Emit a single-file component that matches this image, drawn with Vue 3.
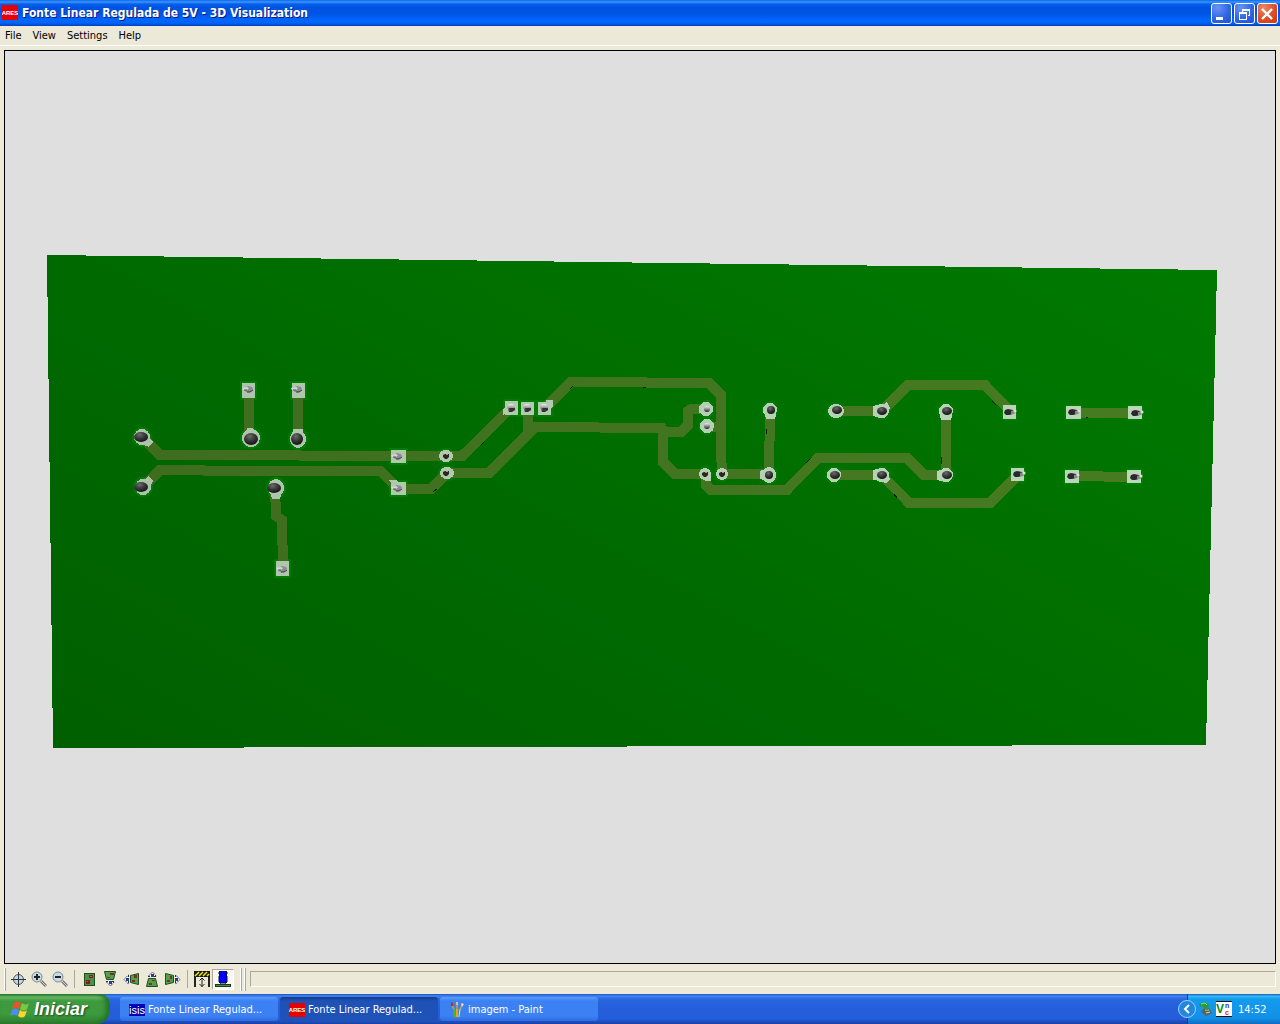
<script setup>
const menus = ['File', 'View', 'Settings', 'Help']

const traces = [
  '249,390 249,438', '298,390 298,438',
  '143,438 160,455 299,455 301,456 462,456 510,409',
  '143,487 160,470 203,470 205,471 380,471 399,489 431,489 447,473 489,473 535,427 662,428',
  '528,408 528,428',
  '275,488 276,516 282,520 283,568',
  '660,428 666,432 681,432 688,425 688,411 691,409 706,409',
  '663,428 663,462 675,474 706,474',
  '545,408 571,382 645,382 647,383 709,383 721,395 721,450 722,474',
  '707,426 720,428', '722,474 769,474', '770,410 769,474',
  '706,474 706,485 711,490 787,490 818,458 907,458 924,475 946,475',
  '836,411 882,411 908,385 985,385 1010,411', '946,411 946,475',
  '834,475 882,475 909,503 990,503 1018,475',
  '1073,413 1136,413', '1072,476 1134,477',
]

const scuffs = ['481,445 484,442', '433,492 437,489', '570,389 573,386', '643,387 646,387', '766,429 766,434', '806,463 810,459', '941,457 941,464', '992,401 996,405', '894,494 897,498', '1086,417 1088,417']

const round = [
  [142, 437, 8, 8], [143, 487, 8, 8], [251, 438, 9, 9], [298, 439, 8, 9], [276, 488, 8, 9],
  [446, 456, 7, 6], [447, 473, 7, 6], [706, 409, 7, 7], [707, 426, 7, 7], [705, 474, 6, 6], [722, 474, 6, 6],
  [770, 410, 7, 7], [769, 475, 7, 8], [836, 411, 8, 7], [882, 411, 7, 7], [834, 475, 7, 7], [882, 475, 7, 7],
  [946, 411, 7, 7], [946, 475, 7, 7],
]
const corners = [
  '143,445 149,447 153,442 148,436', '143,481 149,476 153,481 149,488',
  '246,436 247,428 253,428 256,434', '292,436 293,429 303,429 304,436', '270,492 272,499 280,499 282,492',
  '706,403 699,406 699,413 707,415', '709,420 714,424 713,431 707,432', '705,480 705,481 711,481 711,474',
  '764,410 766,419 775,419 777,410', '768,468 760,471 760,479 768,481',
  '882,404 873,406 873,416 880,418', '884,404 887,402 890,408 888,412', '882,468 873,470 873,480 880,481', '882,482 886,483 890,479 888,474',
  '939,411 941,420 951,420 953,411', '946,468 937,471 937,480 945,482',
  '506,413 503,415 503,410 505,407', '546,402 546,400 553,400 553,407 550,409', '391,483 389,480 396,480 401,484',
]
const square = [
  [242, 383, 13, 15], [292, 383, 13, 15], [276, 561, 13, 15], [391, 450, 15, 13], [391, 482, 15, 13],
  [505, 401, 13, 14], [521, 402, 13, 13], [538, 402, 13, 13], [1003, 405, 13, 14], [1011, 468, 13, 13],
  [1066, 406, 15, 13], [1128, 406, 14, 13], [1065, 470, 14, 13], [1127, 470, 14, 13],
]
const domes = [[141, 437, 7, 5], [141, 487, 7, 5], [251, 439, 7, 6], [297, 439, 6, 6], [274, 488, 7, 5], [771, 410, 4, 4], [769, 475, 4, 4], [837, 410, 5, 4], [882, 411, 5, 4], [835, 475, 5, 4], [882, 475, 5, 4], [947, 411, 5, 4], [947, 475, 5, 4]]
const nubs = [[248, 389], [297, 389], [282, 569], [397, 456], [397, 488]]
const capped = [[511, 408], [527, 408], [544, 408]]
const small = [[446, 456], [446, 473], [705, 474], [722, 474]]
const silver = [[707, 409], [707, 426]]
const pins = [[1009, 412], [1018, 474], [1073, 412], [1136, 413], [1072, 476], [1135, 477]]
</script>

<template>
  <div class="window">
    <header class="titlebar">
      <svg class="app" viewBox="0 0 16 16"><rect y="0" width="16" height="15" fill="#e80000" /><text x="8" y="10" text-anchor="middle" class="ares">ARES</text></svg>
      <h1>Fonte Linear Regulada de 5V - 3D Visualization</h1>
      <button class="ctl" aria-label="Minimize"><svg viewBox="0 0 19 19"><path d="M4 13h7v3H4z" fill="#fff" /></svg></button>
      <button class="ctl" aria-label="Restore"><svg viewBox="0 0 19 19" fill="#fff" shape-rendering="crispEdges"><path d="M7 5h8v7h-2v-1h1V7H8v1H7zM4 8h8v8H4zM5 10v5h6v-5z" fill-rule="evenodd" /></svg></button>
      <button class="ctl close" aria-label="Close"><svg viewBox="0 0 19 19"><path d="M4 5l10 10M14 5L4 15" stroke="#fff" stroke-width="2.400" /></svg></button>
    </header>

    <nav class="menubar"><button v-for="m in menus" :key="m">{{ m }}</button></nav>

    <main class="viewport">
      <svg class="board" viewBox="5 51 1270 912" role="img" aria-label="Circuit board">
        <defs>
          <linearGradient id="mask" gradientUnits="userSpaceOnUse" x1="400" y1="900" x2="850" y2="100"><stop offset="0" stop-color="#006000" /><stop offset=".5" stop-color="#006c00" /><stop offset="1" stop-color="#007900" /></linearGradient>
          <linearGradient id="copper" gradientUnits="userSpaceOnUse" x1="150" y1="0" x2="1140" y2="0"><stop offset="0" stop-color="#3e6d1e" /><stop offset="1" stop-color="#477c22" /></linearGradient>
          <linearGradient id="tin" gradientUnits="userSpaceOnUse" x1="150" y1="0" x2="1140" y2="0"><stop offset="0" stop-color="#abc3aa" /><stop offset="1" stop-color="#bbd8bb" /></linearGradient>
          <radialGradient id="dome" cx=".4" cy=".28" r=".7"><stop offset="0" stop-color="#6c6c6c" /><stop offset=".45" stop-color="#404040" /><stop offset="1" stop-color="#151515" /></radialGradient>
          <linearGradient id="metal" x1="0" y1="0" x2="0" y2="1"><stop offset="0" stop-color="#eee" /><stop offset=".45" stop-color="#999" /><stop offset="1" stop-color="#222" /></linearGradient>
        </defs>
        <polygon points="47,255 1217,270 1206,745 53,748" fill="url(#mask)" shape-rendering="crispEdges" />
        <g fill="none" stroke="#007c00" stroke-width="4" stroke-linejoin="round">
          <ellipse v-for="(p, i) in round" :key="'h' + i" :cx="p[0]" :cy="p[1]" :rx="p[2]" :ry="p[3]" />
          <rect v-for="(p, i) in square" :key="'s' + i" :x="p[0]" :y="p[1]" :width="p[2]" :height="p[3]" />
        </g>
        <g fill="none" stroke="url(#copper)" stroke-width="10" shape-rendering="crispEdges">
          <path v-for="t in traces" :key="t" :d="'M' + t + 'l.01 .01'" />
        </g>
        <path v-for="s in scuffs" :key="s" :d="'M' + s" stroke="#061806" shape-rendering="crispEdges" />
        <g fill="url(#tin)" shape-rendering="crispEdges">
          <path v-for="c in corners" :key="c" :d="'M' + c + 'z'" />
          <path v-for="(p, i) in round" :key="i" :d="`M${p[0] - p[2]} ${p[1]}a${p[2]} ${p[3]} 0 1 0 ${2 * p[2]} 0a${p[2]} ${p[3]} 0 1 0 ${-2 * p[2]} 0`" />
          <rect v-for="(p, i) in square" :key="'q' + i" :x="p[0]" :y="p[1]" :width="p[2]" :height="p[3]" />
        </g>
        <ellipse v-for="(p, i) in domes" :key="'d' + i" :cx="p[0]" :cy="p[1]" :rx="p[2]" :ry="p[3]" fill="url(#dome)" />
        <g v-for="(p, i) in nubs" :key="'n' + i" :transform="`translate(${p[0]} ${p[1]})`">
          <path d="M-5 0l5-3 4 1 1 2-3 3h-4z" fill="#8b8b90" /><path d="M-6-1l5-1 2 1-2 2h-4z" fill="#d4d4dc" /><path d="M-1 3h3l3-2" stroke="#333" fill="none" /><path d="M-4 1h3" stroke="#555" />
        </g>
        <g v-for="(p, i) in capped" :key="'c' + i" :transform="`translate(${p[0]} ${p[1]})`">
          <path d="M-4-1l2-3h4l2 3v3l-3 2h-3z" fill="url(#metal)" /><path d="M-2 0h6v2l-2 1h-3z" fill="#333" />
        </g>
        <g v-for="(p, i) in small" :key="'m' + i" :transform="`translate(${p[0]} ${p[1]})`">
          <path d="M-3-1l2-1h4v3l-2 2h-2l-2-2z" fill="#292725" /><path d="M0-2h2v1H0z" fill="#e88b0c" />
        </g>
        <ellipse v-for="(p, i) in silver" :key="'v' + i" :cx="p[0]" :cy="p[1]" rx="3" ry="3" fill="url(#metal)" />
        <g v-for="(p, i) in pins" :key="'p' + i" :transform="`translate(${p[0]} ${p[1]})`">
          <path d="M-4-2l3-1 5 1v4l-4 1h-3l-2-2z" fill="#292929" /><path d="M2-1l3-1 2 2-2 2H2z" fill="#888" /><circle cx="6" cy="-1" r="1.500" fill="#ddd" />
        </g>
      </svg>
    </main>

    <footer class="tools">
      <i class="grip"></i>
      <button aria-label="Center"><svg viewBox="0 0 16 16" fill="none"><circle cx="8.500" cy="8.500" r="5" fill="#b8d8ec" stroke="#555" /><path d="M8.500 1v15M1 8.500h15" stroke="#333" /></svg></button>
      <button aria-label="Zoom in"><svg viewBox="0 0 16 16" fill="none"><path d="M10 10l5 5" stroke="#777" stroke-width="3" /><path d="M10 10l5 5" stroke="#ccc" /><circle cx="6" cy="6" r="5" fill="#c0dced" stroke="#888" /><path d="M6 3v6M3 6h6" stroke="#222" stroke-width="2" /></svg></button>
      <button aria-label="Zoom out"><svg viewBox="0 0 16 16" fill="none"><path d="M10 10l5 5" stroke="#777" stroke-width="3" /><path d="M10 10l5 5" stroke="#ccc" /><circle cx="6" cy="6" r="5" fill="#c0dced" stroke="#888" /><path d="M3 6h6" stroke="#222" stroke-width="2" /></svg></button>
      <i class="sep"></i>
      <button aria-label="Top view"><svg viewBox="0 0 16 16" shape-rendering="crispEdges"><path d="M3 2h11v13H3z" fill="#234d20" /><path d="M4 3h9v11H4z" fill="#489246" /><path d="M8 4h4v3H8zM5 9h4v4H5z" fill="#7c2020" /><path d="M9 5h2v1H9zM6 10h1v1H6z" fill="#d05050" /></svg></button>
      <button aria-label="Front view"><svg viewBox="0 0 16 16"><path d="M2.500.5h11l-2 8h-7z" fill="#52a04e" stroke="#234d20" /><path d="M8 2h4v2H8zM5 6h3v1H5z" fill="#7c3020" /><path d="M4 10.500h8.500l-4 4.500z" fill="#fff" stroke="#333" stroke-dasharray="2 1" /><path d="M7 10h3v3H7z" fill="#2337bb" /></svg></button>
      <button aria-label="Left view"><svg viewBox="0 0 16 16"><path d="M15.500 2.500v11l-8-2v-7z" fill="#52a04e" stroke="#234d20" /><path d="M11 4h3v3h-3zM9 9h3v2H9z" fill="#7c3020" /><path d="M5.500 4v9L1 8.500z" fill="#fff" stroke="#333" stroke-dasharray="2 1" /><path d="M3 7h3v3H3z" fill="#2337bb" /></svg></button>
      <button aria-label="Back view"><svg viewBox="0 0 16 16"><path d="M2.500 15.500h11l-2-8h-7z" fill="#52a04e" stroke="#234d20" /><path d="M8 9h3v1H8zM5 12h3v2H5z" fill="#7c3020" /><path d="M4 5.500h8.500L8.500 1z" fill="#fff" stroke="#333" stroke-dasharray="2 1" /><path d="M7 3h3v3H7z" fill="#2337bb" /></svg></button>
      <button aria-label="Right view"><svg viewBox="0 0 16 16"><path d="M.5 2.500v11l8-2v-7z" fill="#52a04e" stroke="#234d20" /><path d="M5 5h2v3H5zM2 9h3v2H2z" fill="#7c3020" /><path d="M10.500 4v9L15 8.500z" fill="#fff" stroke="#333" stroke-dasharray="2 1" /><path d="M10 7h3v3h-3z" fill="#2337bb" /></svg></button>
      <i class="sep"></i>
      <button aria-label="Height"><svg viewBox="0 0 16 16"><path d="M0 0h16v6H0z" fill="#181808" /><path d="M1 5l4-4M5 5l4-4M9 5l4-4M13 5l2-2" stroke="#f4e800" stroke-width="1.500" /><path d="M1 6v10M15 6v10" stroke="#222" stroke-width="2" /><path d="M8 7v9M5.500 9.500L8 7l2.500 2.500M5.500 13L8 15.500l2.500-2.500" fill="none" stroke="#222" /></svg></button>
      <button class="pressed" aria-label="Components" aria-pressed="true"><svg viewBox="0 0 16 16"><path d="M5 12h1v3H5zM10 12h1v3h-1z" fill="#777" /><path d="M5 0h6l1 1v2l-1 1 1 1v6l-1 1H5l-1-1V5l1-1-1-1V1z" fill="#00f" stroke="#113" stroke-width="1" /><path d="M0 13h16v3H0z" fill="#173b16" /><path d="M1 14h14v1H1z" fill="#489246" /></svg></button>
      <i class="grip mid"></i><i class="grip second"></i>
      <output class="status" aria-label="Status"></output>
    </footer>

    <div class="taskbar">
      <button class="start">
        <svg viewBox="0 0 20 20"><path d="M4 4q3-3 7 0L9 10q-3-3-7 0z" fill="#ee5124" /><path d="M12 4q4 3 7 0l-2 6q-3 3-7 0z" fill="#7bc943" /><path d="M2 11q3-3 7 0l-2 6q-3-3-7 0z" fill="#4b8df5" /><path d="M10 11q4 3 7 0l-2 6q-3 3-7 0z" fill="#ffd42e" /></svg>
        Iniciar
      </button>
      <button class="task"><svg viewBox="0 0 16 16"><path d="M0 2h16v12H0z" fill="#0000b4" /><text x="8" y="12" text-anchor="middle" class="isis">isis</text></svg><span>Fonte Linear Regulad...</span></button>
      <button class="task active"><svg viewBox="0 0 16 16"><rect y="1" width="16" height="14" fill="#e80000" /><text x="8" y="10" text-anchor="middle" class="ares">ARES</text></svg><span>Fonte Linear Regulad...</span></button>
      <button class="task"><svg viewBox="0 0 16 16"><path d="M5 8L3 3M8 8V3M11 8l2-5" stroke="#c99a50" stroke-width="1.500" /><path d="M2 0l2 1v3H2z" fill="#b83018" /><path d="M7 0h2v3H7z" fill="#e8c070" /><path d="M12 1l3 1-2 3z" fill="#ffe28a" /><path d="M3 7h9l-2 9H5z" fill="#4c8c8a" /><path d="M5 7l1 8" stroke="#42b843" stroke-width="2" /><path d="M8 7v8" stroke="#f29b28" stroke-width="2" /><path d="M11 7l-1 8" stroke="#ddd" /></svg><span>imagem - Paint</span></button>
      <div class="tray">
        <button class="chevron" aria-label="Show hidden icons"><svg viewBox="0 0 18 18"><circle cx="9" cy="9" r="8.500" fill="#2186df" stroke="#9ed2f6" /><path d="M11 5L7 9l4 4" fill="none" stroke="#fff" stroke-width="2" /></svg></button>
        <svg viewBox="0 0 16 16"><path d="M5 8l6-1 3 5-6 3-5-4z" fill="#59635f" /><path d="M7 9l4 0M8 12l4-1" stroke="#d1d8d1" /><path d="M1 3l6-2 4 3-1 5-4-1-1-3-3 1z" fill="#2b9a34" /><path d="M3 3l4-1 2 2" stroke="#91dd75" fill="none" /></svg>
        <svg viewBox="0 0 16 16"><path d="M0 0h16v16H0z" fill="#fff" /><path d="M0 0h16v1H0zM0 15h16v1H0z" fill="#111" /><text x="0" y="12" class="vnc" fill="#008c22" font-size="12">V</text><text x="9" y="7" class="vnc" fill="#1733cc" font-size="7">n</text><text x="9" y="14" class="vnc" fill="#d81818" font-size="7">c</text></svg>
        <time>14:52</time>
      </div>
    </div>
  </div>
</template>

<style>
body { margin: 0; }
</style>

<style scoped>
.window { display: flex; flex-direction: column; height: 100vh; background: #ece9d8; font: 11px/14px "DejaVu Sans Condensed", "Noto Sans", sans-serif; color: #000; overflow: hidden; }
button { box-sizing: border-box; margin: 0; padding: 0; border: 0; background: none; font: inherit; color: inherit; }
svg { display: block; flex: none; }
.ares { font: bold 6px "Liberation Sans Narrow", "Liberation Sans", sans-serif; fill: #fff; }
.isis { font: 11px "Liberation Sans", sans-serif; fill: #fff; }
.vnc { font-family: "Liberation Sans", sans-serif; font-weight: bold; }

.titlebar { display: flex; align-items: center; gap: 2px; flex: none; height: 26px; box-sizing: border-box; padding: 0 2px; background: linear-gradient(#0a6af0 0, #3d95ff 2px, #0560e8 4px, #0053e1 8px, #0055e5 14px, #0066fd 20px, #0064f6 23px, #0040c0 26px); }
.app { width: 16px; height: 16px; }
h1 { flex: 1; margin: 0 0 0 2px; font: bold 12px/16px "DejaVu Sans Condensed", sans-serif; color: #fff; text-shadow: 1px 1px 0 #0a1883; white-space: nowrap; }
.ctl { width: 21px; height: 21px; border: 1px solid #fff; border-radius: 3px; background: radial-gradient(circle at 30% 20%, #6a94f2, #2f66e6 55%, #1f4fd6); }
.ctl svg { width: 19px; height: 19px; }
.close { background: radial-gradient(circle at 30% 20%, #ea8a6c, #e0502b 50%, #c83a12); }

.menubar { display: flex; gap: 1px; flex: none; height: 20px; box-sizing: border-box; border-bottom: 1px solid #fff; }
.menubar button { padding: 0 5px; }
.viewport { flex: 1; min-height: 0; margin: 4px 4px 0; border: 1px solid #000; background: #dfdfdf; }
.board { width: 100%; height: 100%; }

.tools { display: flex; align-items: center; flex: none; height: 30px; padding: 0 4px; }
.tools button { display: grid; place-items: center; width: 21px; height: 21px; }
.tools svg { width: 16px; height: 16px; }
.grip { width: 1px; height: 23px; margin-right: 1px; border: solid; border-width: 0 1px 0 0; border-color: #aca899; background: #fff; }
.mid { margin: 0 2px 0 6px; }
.second { margin-right: 4px; }
.sep { width: 1px; height: 18px; margin: 0 3px 0 4px; background: #aca899; }
.tools .pressed { width: 22px; background: #f8f7f2; border: 1px solid; border-color: #aca899 #fff #fff #aca899; }
.status { flex: 1; height: 14px; border: 1px solid; border-color: #aca899 #fff #fff #aca899; }

.taskbar { display: flex; align-items: center; gap: 2px; flex: none; height: 30px; color: #fff; background: linear-gradient(#1f4fbf 0, #3e86f0 2px, #2a66e0 5px, #245edb 15px, #245edb 25px, #1941a5 30px); }
.start { display: flex; align-items: center; gap: 4px; width: 110px; height: 30px; margin-right: 8px; padding-left: 10px; border-radius: 0 10px 14px 0; background: linear-gradient(#2f7a2f 0, #6cbc6a 3px, #3f9a3f 7px, #3c9a3c 20px, #2e7f2e 30px); box-shadow: inset -4px 0 5px #23702a; font: italic bold 18px/24px "Liberation Sans", sans-serif; text-shadow: 1px 1px 2px #1d4a1d; }
.start svg { width: 20px; height: 20px; }
.task { display: flex; align-items: center; gap: 3px; width: 158px; height: 24px; padding: 1px 0 0 9px; border-radius: 3px; background: linear-gradient(#5c9bfa, #3c81f3 4px, #3c81f3 19px, #2f6be0); white-space: nowrap; }
.task svg { width: 16px; height: 16px; }
.active { background: linear-gradient(#143b87, #1e52b7 4px, #1e52b7); }
.tray { display: flex; align-items: center; gap: 2px; box-sizing: border-box; width: 92px; height: 30px; margin-left: auto; background: linear-gradient(#0c59b9 0, #3cb8f5 2px, #139bee 5px, #1290e8 24px, #0d6cc4 30px); box-shadow: -1px 0 0 #0c3f8f; }
.tray svg { width: 16px; height: 16px; }
.chevron { margin-left: -10px; }
.tray .chevron svg { width: 18px; height: 18px; }
.tray time { margin-left: 4px; padding-top: 1px; }
</style>
